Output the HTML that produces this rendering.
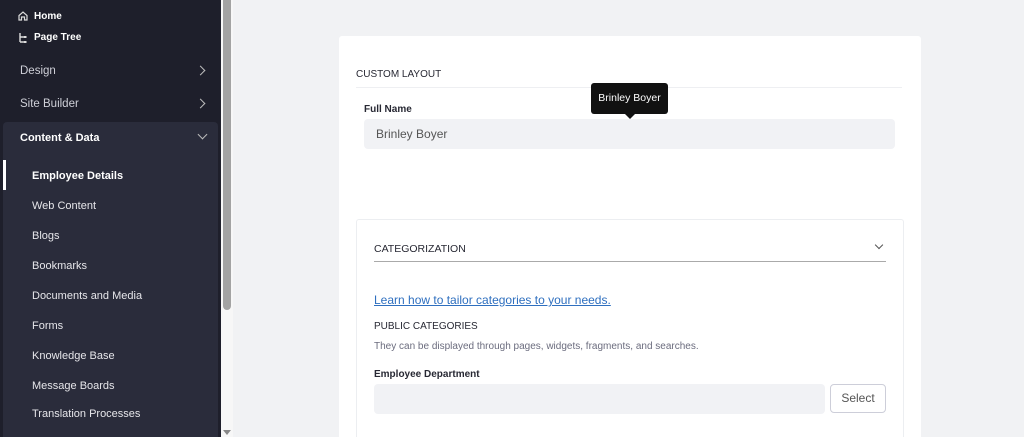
<!DOCTYPE html>
<html><head><style>
*{margin:0;padding:0;box-sizing:border-box}
html,body{width:1024px;height:437px;overflow:hidden}
body{background:#f1f2f4;font-family:"Liberation Sans",sans-serif;position:relative}
.sb{position:absolute;left:0;top:0;width:221px;height:437px;background:#1e1f2b;color:#fff}
.track{position:absolute;left:221px;top:0;width:12px;height:437px;background:#f7f7f7}
.thumb{position:absolute;left:223px;top:0;width:8px;height:310px;background:#a3a3a3;border-radius:0 0 4px 4px}
.arr{position:absolute;left:223px;top:430px;width:0;height:0;border-left:4px solid transparent;border-right:4px solid transparent;border-top:5px solid #888}
.t{position:absolute;font-size:12px;color:#fff}
.s{font-size:10px;font-weight:bold}
.it{position:absolute;left:32px;font-size:11px;color:#e6e6ea}
.sec{position:absolute;left:3px;top:122px;width:215px;height:315px;background:#2a2c3b;border-radius:4px 4px 0 0}
.chev{position:absolute;width:7px;height:7px;border-right:1.5px solid #bbb;border-bottom:1.5px solid #bbb}
.card{position:absolute;left:339px;top:36px;width:582px;height:401px;background:#fff;border-radius:3px 3px 0 0;overflow:hidden}
.lbl{position:absolute;font-size:10.5px;color:#272833}
</style></head><body>
<div class="sb">
<svg style="position:absolute;left:18px;top:11px" width="10" height="10" viewBox="0 0 10 10"><path d="M1 9V4.5L5 1l4 3.5V9H6.5V6h-3v3z" fill="none" stroke="#ddd" stroke-width="1.2"/></svg>
<div class="t s" style="left:34px;top:11px">Home</div>
<svg style="position:absolute;left:18px;top:32px" width="10" height="12" viewBox="0 0 10 12"><path d="M2 1v9M2 5h4M2 10h4" stroke="#ddd" stroke-width="1.4" fill="none"/><rect x="6" y="4" width="2.5" height="2" fill="#ddd"/><rect x="6" y="9" width="2.5" height="2" fill="#ddd"/></svg>
<div class="t s" style="left:34px;top:32px">Page Tree</div>
<div class="t" style="left:20px;top:65px;font-size:11.5px;color:#cfd0d8">Design</div>
<div class="chev" style="left:197px;top:67px;transform:rotate(-45deg)"></div>
<div class="t" style="left:20px;top:98px;font-size:11.5px;color:#cfd0d8">Site Builder</div>
<div class="chev" style="left:197px;top:100px;transform:rotate(-45deg)"></div>
<div class="sec"></div>
<div class="t" style="left:20px;top:132px;font-size:11px;font-weight:bold">Content &amp; Data</div>
<div class="chev" style="left:199px;top:131px;transform:rotate(45deg)"></div>
<div style="position:absolute;left:3px;top:160px;width:3px;height:30px;background:#fff"></div>
<div class="it" style="top:170px;font-weight:bold;color:#fff">Employee Details</div>
<div class="it" style="top:200px">Web Content</div>
<div class="it" style="top:230px">Blogs</div>
<div class="it" style="top:260px">Bookmarks</div>
<div class="it" style="top:290px">Documents and Media</div>
<div class="it" style="top:320px">Forms</div>
<div class="it" style="top:350px">Knowledge Base</div>
<div class="it" style="top:380px">Message Boards</div>
<div class="it" style="top:408px">Translation Processes</div>
</div>
<div class="track"></div><div class="thumb"></div><div class="arr"></div>
<div class="card">
<div class="lbl" style="left:17px;top:33px;font-size:10px">CUSTOM LAYOUT</div>
<div style="position:absolute;left:17px;top:51px;width:546px;height:1px;background:#eeeff2"></div>
<div class="lbl" style="left:25px;top:68px;font-weight:bold;font-size:10px">Full Name</div>
<div style="position:absolute;left:25px;top:83px;width:531px;height:30px;background:#f1f2f5;border-radius:4px"></div>
<div style="position:absolute;left:37px;top:91px;font-size:12px;color:#555">Brinley Boyer</div>
<div style="position:absolute;left:17px;top:183px;width:548px;height:218px;border:1px solid #eceef1;border-bottom:none;border-radius:3px 3px 0 0"></div>
<div class="lbl" style="left:35px;top:207px;font-size:10.5px">CATEGORIZATION</div>
<div class="chev" style="left:537px;top:206px;width:6px;height:6px;border-color:#555;transform:rotate(45deg)"></div>
<div style="position:absolute;left:35px;top:225px;width:512px;height:1px;background:#aaa"></div>
<div style="position:absolute;left:35px;top:257px;font-size:12px;color:#2e6fbf;text-decoration:underline">Learn how to tailor categories to your needs.</div>
<div class="lbl" style="left:35px;top:285px;font-size:10px">PUBLIC CATEGORIES</div>
<div style="position:absolute;left:35px;top:305px;font-size:10px;color:#6b6c7e">They can be displayed through pages, widgets, fragments, and searches.</div>
<div class="lbl" style="left:35px;top:333px;font-weight:bold;font-size:10px">Employee Department</div>
<div style="position:absolute;left:35px;top:348px;width:451px;height:30px;background:#f1f2f5;border-radius:4px"></div>
<div style="position:absolute;left:491px;top:348px;width:56px;height:29px;border:1px solid #cdced9;border-radius:4px;font-size:12px;color:#555;text-align:center;line-height:27px">Select</div>
</div>
<div style="position:absolute;left:591px;top:83px;width:77px;height:31px;background:#111;border-radius:3px;color:#fff;font-size:10.5px;text-align:center;line-height:31px">Brinley Boyer</div>
<div style="position:absolute;left:625px;top:114px;border-left:5px solid transparent;border-right:5px solid transparent;border-top:5px solid #111"></div>
</body></html>
